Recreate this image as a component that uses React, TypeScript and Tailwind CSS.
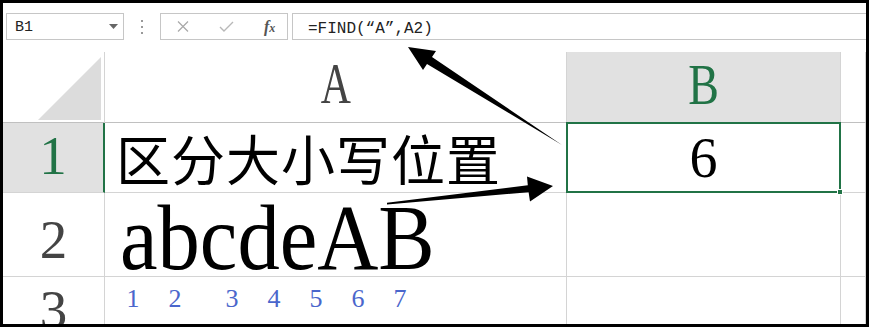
import React from "react";

const serif = "font-['Liberation_Serif','Times_New_Roman',serif]";
const mono = "font-['Liberation_Mono','Courier_New',monospace]";

const Toolbar = () => (
  <div className="h-[49px] shrink-0 flex items-start pt-[10px] pl-[3px]">
    {/* name box */}
    <div className="w-[118px] h-[27px] border border-[#c6c6c6] flex items-center justify-between pl-[8px] pr-[5px]">
      <span className={`${mono} text-[15px] text-[#222] pt-[3px]`}>B1</span>
      <svg width="9" height="5" viewBox="0 0 9 5">
        <path d="M0 0 L9 0 L4.5 5 Z" fill="#666" />
      </svg>
    </div>
    <div className="w-[36px] h-[27px] flex flex-col items-center justify-center gap-[4px]">
      <div className="w-[2px] h-[2px] bg-[#999]" />
      <div className="w-[2px] h-[2px] bg-[#999]" />
      <div className="w-[2px] h-[2px] bg-[#999]" />
    </div>
    {/* cancel / enter / fx */}
    <div className="w-[128px] h-[27px] border border-[#c6c6c6] flex items-center pl-[16px] gap-[30px]">
      <svg width="12" height="11" viewBox="0 0 12 11">
        <path d="M1 0.5 L11 10.5 M11 0.5 L1 10.5" stroke="#a8a8a8" strokeWidth="1.2" fill="none" />
      </svg>
      <svg width="15" height="11" viewBox="0 0 15 11">
        <path d="M1 6 L5 10 L14 1" stroke="#b8b8b8" strokeWidth="1.4" fill="none" />
      </svg>
      <span className={`${serif} italic font-bold text-[16px] text-[#555] leading-none`}>
        f<span className="text-[12px]">x</span>
      </span>
    </div>
    {/* formula */}
    <div className="ml-[4px] flex-1 h-[27px] border-y border-l border-[#c6c6c6] flex items-center pl-[15px]">
      <span className={`${mono} text-[16px] text-[#222] pt-[4px]`}>=FIND(“A”,A2)</span>
    </div>
  </div>
);

const Cell = ({ className = "", children }: { className?: string; children?: React.ReactNode }) => (
  <div className={`border-r border-b border-[#d4d4d4] ${className}`}>{children}</div>
);

const digits: { d: string; gap?: boolean }[] = [
  { d: "1" },
  { d: "2" },
  { d: "3", gap: true },
  { d: "4" },
  { d: "5" },
  { d: "6" },
  { d: "7" },
];

const Grid = () => (
  <div className="grid grid-cols-[102px_462px_274px_1fr] grid-rows-[71px_70px_84px_70px]">
    {/* header row */}
    <Cell className="border-b-[#c0c0c0] flex items-end justify-end pr-[3px] pb-[2px]">
      <svg width="63" height="63" viewBox="0 0 63 63">
        <path d="M63 0 L63 63 L0 63 Z" fill="#dcdcdc" />
      </svg>
    </Cell>
    <Cell className="border-b-[#c0c0c0] flex items-end justify-center pb-[9px]">
      <span className={`${serif} text-[58px] leading-none text-[#444] inline-block scale-x-[0.72]`}>A</span>
    </Cell>
    <Cell className="bg-[#e1e1e1] border-b-[#217346] flex items-end justify-center pb-[9px]">
      <span className={`${serif} text-[56px] leading-none text-[#217346] inline-block scale-x-[0.82]`}>B</span>
    </Cell>
    <Cell className="border-b-[#c0c0c0]" />

    {/* row 1 */}
    <Cell className="bg-[#e1e1e1] border-r-[#217346] border-r-2 flex items-end justify-center pb-[9px]">
      <span className={`${serif} text-[55px] leading-none text-[#217346]`}>1</span>
    </Cell>
    <Cell className="flex items-center pl-[11px]">
      <span className="font-['Noto_Sans_CJK_SC',sans-serif] text-[54px] leading-none text-black tracking-[1px]">
        区分大小写位置
      </span>
    </Cell>
    <Cell className="relative flex items-center justify-center">
      <span className={`${serif} text-[56px] leading-none text-black`}>6</span>
      <div className="absolute -left-px -top-px right-[-1px] bottom-[-1px] border-2 border-[#217346]" />
      <div className="absolute right-[-3px] bottom-[-3px] w-[6px] h-[6px] bg-[#217346] border border-white" />
    </Cell>
    <Cell />

    {/* row 2 */}
    <Cell className="flex items-end justify-center pb-[9px]">
      <span className={`${serif} text-[55px] leading-none text-[#444]`}>2</span>
    </Cell>
    <Cell className="pl-[15px] pt-[4px]">
      <span className={`${serif} text-[94px] leading-[80px] text-black inline-block origin-left scale-x-[0.9]`}>
        abcdeAB
      </span>
    </Cell>
    <Cell />
    <Cell />

    {/* row 3 */}
    <Cell className="flex items-end justify-center pb-[9px]">
      <span className={`${serif} text-[55px] leading-none text-[#444]`}>3</span>
    </Cell>
    <Cell className="flex items-start pl-[7px] pt-[9px]">
      {digits.map((x) => (
        <span
          key={x.d}
          className={`${serif} text-[26px] leading-none text-[#4a66cc] w-[42px] text-center ${x.gap ? "ml-[15px]" : ""}`}
        >
          {x.d}
        </span>
      ))}
    </Cell>
    <Cell />
    <Cell />
  </div>
);

export default function App() {
  return (
    <div className="w-[869px] h-[327px] bg-black p-[3px]">
      <div className="relative w-full h-full bg-white overflow-hidden flex flex-col">
        <Toolbar />
        <Grid />
        {/* annotation arrows (page coordinates minus 3px frame) */}
        <svg className="absolute inset-0 pointer-events-none" width="863" height="321" viewBox="3 3 863 321">
          <polygon
            points="408,47 436,51 432,57 562,145 427,64 423,70"
            fill="#000"
          />
          <polygon
            points="553,186 527,176.5 527.8,185.2 387,202.8 387,204.6 528.6,192.2 530,201.5"
            fill="#000"
          />
        </svg>
      </div>
    </div>
  );
}
